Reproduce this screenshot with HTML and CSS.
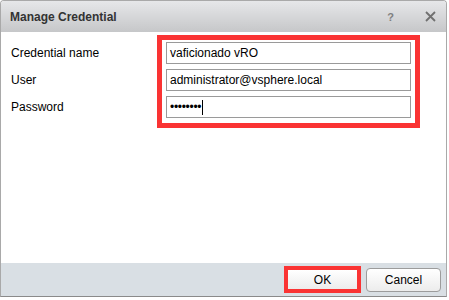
FILE: index.html
```html
<!DOCTYPE html>
<html lang="en">
<head>
    <meta charset="UTF-8">
    <title>Manage Credential</title>
    <link rel="stylesheet" href="styles.css">
</head>
<body>
    <div class="dialog">
        <div class="dialog-header">
            <span class="dialog-title">Manage Credential</span>
            <span class="dialog-tools">
                <span class="help">?</span>
                <svg class="close" width="11" height="11" viewBox="0 0 11 11">
                    <path d="M1 1 L10 10 M10 1 L1 10" stroke="#707070" stroke-width="1.8" fill="none"/>
                </svg>
            </span>
        </div>
        <div class="dialog-body">
            <div class="labels">
                <div class="label">Credential name</div>
                <div class="label">User</div>
                <div class="label">Password</div>
            </div>
            <div class="highlight fields">
                <div class="field">vaficionado vRO</div>
                <div class="field">administrator@vsphere.local</div>
                <div class="field"><span class="dots">&bull;&bull;&bull;&bull;&bull;&bull;&bull;&bull;</span><span class="caret"></span></div>
            </div>
        </div>
        <div class="dialog-footer">
            <div class="highlight ok-wrap">
                <button class="btn btn-ok">OK</button>
            </div>
            <button class="btn btn-cancel">Cancel</button>
        </div>
    </div>
</body>
</html>
```

FILE: styles.css
```css
* {
    margin: 0;
    padding: 0;
    box-sizing: border-box;
}

body {
    font-family: 'Liberation Sans', Arial, sans-serif;
    font-size: 12px;
    color: #000;
    background: #fff;
}

.dialog {
    width: 447px;
    height: 297px;
    display: flex;
    flex-direction: column;
    border: 1px solid #a9a9a9;
    border-bottom-color: #8a8a8a;
    border-radius: 4px 4px 0 0;
    overflow: hidden;
}

/* header */
.dialog-header {
    height: 31px;
    display: flex;
    align-items: center;
    justify-content: space-between;
    padding: 0 10px 0 9px;
    background: linear-gradient(#e6e7e9, #c6c7c9);
}

.dialog-title {
    font-weight: bold;
    color: #333;
    font-size: 12px;
}

.dialog-tools {
    display: flex;
    align-items: center;
    gap: 31px;
}

.help {
    color: #808080;
    font-size: 11px;
    font-weight: bold;
}

.close {
    display: block;
}

/* body */
.dialog-body {
    flex: 1;
    display: flex;
    align-items: flex-start;
    padding-top: 3px;
    background: #fff;
}

.labels {
    width: 156px;
    padding: 7px 0 0 10px;
    display: flex;
    flex-direction: column;
    gap: 5px;
}

.label {
    height: 22px;
    line-height: 22px;
}

.highlight {
    border: 5px solid #fa3333;
}

.fields {
    width: 263px;
    padding: 2px 4px 5px 4px;
    display: flex;
    flex-direction: column;
    gap: 5px;
}

.field {
    height: 22px;
    line-height: 20px;
    border: 1px solid #9a9a9a;
    padding-left: 3px;
    display: flex;
    align-items: center;
    white-space: nowrap;
}

.dots {
    font-size: 12px;
    letter-spacing: -0.3px;
}

.caret {
    width: 1px;
    height: 15px;
    background: #000;
    margin-left: 1px;
}

/* footer */
.dialog-footer {
    height: 33px;
    display: flex;
    align-items: center;
    justify-content: flex-end;
    gap: 5px;
    padding-right: 5px;
    background: #d9dfe4;
}

.btn {
    font-family: 'Liberation Sans', Arial, sans-serif;
    font-size: 12px;
    color: #000;
    background: linear-gradient(#ffffff, #ececec);
    border: 1px solid #9c9c9c;
    border-radius: 4px;
    cursor: pointer;
}

.ok-wrap {
    border-width: 4px;
    display: flex;
}

.btn-ok {
    width: 69px;
    height: 19px;
    border: none;
    border-radius: 0;
}

.btn-cancel {
    width: 75px;
    height: 24px;
}
```
